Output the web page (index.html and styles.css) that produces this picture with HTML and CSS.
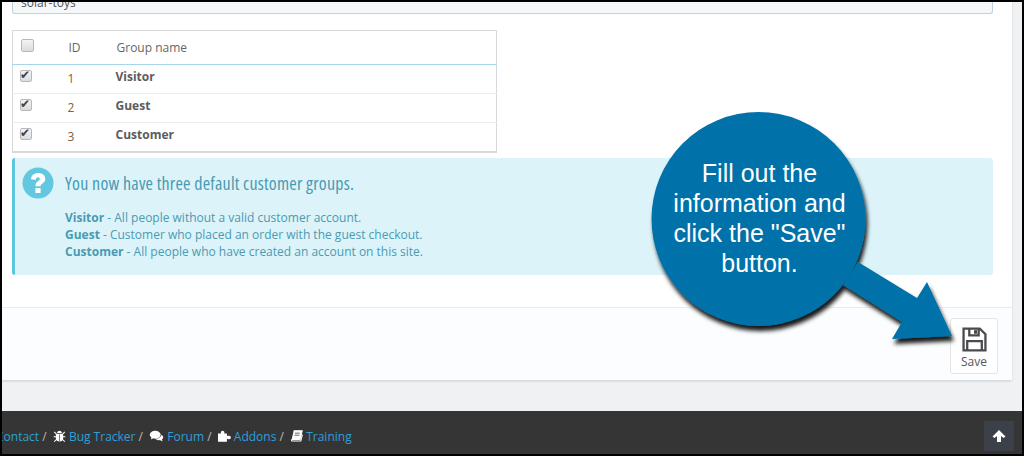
FILE: index.html
```html
<!DOCTYPE html>
<html lang="en">
<head>
<meta charset="UTF-8">
<meta name="viewport" content="width=device-width, initial-scale=1.0">
<title>Customer groups</title>
<link rel="stylesheet" href="styles.css">
</head>
<body>

<div class="frame">

  <main class="content">
    <div class="panel">
      <div class="panel-body">
        <div class="text-field">solar-toys</div>

        <table class="group-table">
          <thead>
            <tr>
              <th class="col-check"><input type="checkbox"></th>
              <th class="col-id">ID</th>
              <th>Group name</th>
            </tr>
          </thead>
          <tbody>
            <tr>
              <td class="col-check"><input type="checkbox" checked></td>
              <td class="col-id">1</td>
              <td class="group-name">Visitor</td>
            </tr>
            <tr>
              <td class="col-check"><input type="checkbox" checked></td>
              <td class="col-id">2</td>
              <td class="group-name">Guest</td>
            </tr>
            <tr>
              <td class="col-check"><input type="checkbox" checked></td>
              <td class="col-id">3</td>
              <td class="group-name">Customer</td>
            </tr>
          </tbody>
        </table>

        <div class="alert-info">
          <svg class="alert-icon" viewBox="0 0 32 32">
            <circle cx="16" cy="16" r="15.5" fill="#62c8e0"/>
            <path d="M9 12.200C9.300 8.300 12.200 6 16.200 6c4.200 0 7.100 2.400 7.100 5.800 0 2.600-1.400 3.900-3.100 5-1.200.8-1.600 1.300-1.600 2.500H13.400c0-2.500.8-3.700 2.400-4.800 1.300-.9 2-1.500 2-2.500 0-1-.7-1.700-1.800-1.700-1.200 0-2 .8-2.100 2.400zM13.400 21h5.200v5h-5.200z" fill="#fff"/>
          </svg>
          <div class="alert-text">
            <h4>You now have three default customer groups.</h4>
            <p><strong>Visitor</strong> - All people without a valid customer account.</p>
            <p><strong>Guest</strong> - Customer who placed an order with the guest checkout.</p>
            <p><strong>Customer</strong> - All people who have created an account on this site.</p>
          </div>
        </div>
      </div>

      <div class="panel-footer">
        <button class="btn-save">
          <svg class="save-icon" viewBox="0 0 24 24">
            <path d="M1.500 1.500H17l5.500 5.500v15.500H1.500z M7 1.500v6.500h9V1.500 M5 22.500v-9h14v9" fill="none" stroke="#4d4a4f" stroke-width="2.200"/>
            <path d="M11.500 3h3v3.500h-3z" fill="#4d4a4f"/>
          </svg>
          Save
        </button>
      </div>
    </div>
  </main>

  <footer class="page-footer">
    <nav class="footer-links">
      <a href="#">Contact</a> /
      <svg class="foot-icon" viewBox="0 0 16 16"><path d="M5 4.500C5 2.800 6.300 1.500 8 1.500s3 1.300 3 3zM4.500 5.500h7c.6 0 1 .5 1 1V11c0 2.200-2 3.800-4.500 3.800S3.500 13.200 3.500 11V6.500c0-.5.400-1 1-1z" fill="#fff"/><path d="M1.500 3l3 3M14.500 3l-3 3M.8 9h3M15.200 9h-3M1.500 15l3-3M14.500 15l-3-3" stroke="#fff" stroke-width="1.300"/><path d="M8 6v8.500" stroke="#363636" stroke-width=".8"/></svg>
      <a href="#">Bug Tracker</a> /
      <svg class="foot-icon foot-icon-wide" viewBox="0 0 16 16"><ellipse cx="6.500" cy="6.500" rx="6.200" ry="4.500" fill="#fff"/><path d="M2.500 9l-1 3 4-2z" fill="#fff"/><path d="M13.500 6.500c1.300.7 2.200 1.800 2.200 3 0 1-.6 1.900-1.500 2.500l.8 2.300-3.200-1.600c-2 .2-4-.5-5-1.700 3.500 0 6.600-1.800 6.700-4.500z" fill="#fff"/></svg>
      <a href="#">Forum</a> /
      <svg class="foot-icon" viewBox="0 0 16 16"><path d="M0 5h3.700C3 3 4 1.500 5.700 1.500S8.400 3 7.700 5H11v3c1.500-.8 5-.5 5 1.800s-3.500 2.600-5 1.700V15H0z" fill="#fff"/></svg>
      <a href="#">Addons</a> /
      <svg class="foot-icon" viewBox="0 0 16 16"><path d="M4.500 1.500H15l-2.800 10.700H3c-.8 0-1.200.4-1.200 1s.4 1 1.200 1h10.300l2-8" fill="none" stroke="#fff" stroke-width="1.300"/><path d="M4.500 1.500H15l-2.800 10.700H2z" fill="#fff"/><path d="M6 4.500h6M5.500 7h6" stroke="#363636" stroke-width=".9"/></svg>
      <a href="#">Training</a>
    </nav>
    <a class="to-top" href="#">
      <svg viewBox="0 0 14 14"><path d="M7 1l6.500 6.500-2 1.500L9 7v6H5V7L2.500 9 .5 7.500z" fill="#fff"/></svg>
    </a>
  </footer>

  <div class="callout">
    <svg class="callout-shape" viewBox="0 0 330 250">
      <defs>
        <filter id="soft-shadow" x="-10%" y="-10%" width="125%" height="125%">
          <feDropShadow dx="2" dy="5" stdDeviation="2" flood-color="#000" flood-opacity=".9"/>
        </filter>
      </defs>
      <g filter="url(#soft-shadow)" fill="#0271a9">
        <circle cx="110.500" cy="110" r="107"/>
        <path d="M210 153 269 189 279 173 304 227 244 230 254 213 195 176z"/>
      </g>
    </svg>
    <p class="callout-text">Fill out the information and click the "Save" button.</p>
  </div>

</div>

</body>
</html>
```

FILE: styles.css
```css
* {
  box-sizing: border-box;
}

html, body {
  height: 100%;
}

body {
  margin: 0;
  font-family: "Open Sans", Arial, sans-serif;
  font-size: 12px;
  color: #555;
  background-color: #000;
  overflow: hidden;
}

/* black outline around the whole shot */
.frame {
  position: relative;
  height: 456px;
  border: 2px solid #000;
  display: flex;
  flex-direction: column;
  overflow: hidden;
  background-color: #eff1f2;
}

.content {
  flex: 1;
  padding-right: 9px;
}

.panel {
  background-color: #fff;
  border-bottom: 1px solid #d9dcde;
  border-right: 1px solid #e3e5e7;
  border-radius: 0 0 4px 0;
  box-shadow: 0 1px 1px rgba(0, 0, 0, 0.08);
}

.panel-body {
  height: 305px;
  padding: 0 19px 0 10px;
}

.text-field {
  height: 12px;
  margin-bottom: 16px;
  padding: 0 8px;
  line-height: 2px;
  font-size: 12px;
  color: #555;
  background-color: #f5f8f9;
  border: 1px solid #bcd3da;
  border-top: 0;
  border-radius: 0 0 3px 3px;
  overflow: hidden;
}

.group-table {
  width: 485px;
  height: 123px;
  margin-bottom: 5px;
  border: 1px solid #d6d8d9;
  border-bottom-width: 2px;
  border-collapse: collapse;
}

.group-table th {
  height: 34px;
  padding: 0 0 0 5px;
  font-weight: normal;
  font-size: 12px;
  text-align: left;
  color: #666;
  border-bottom: 1px solid #a6d5ec;
}

.group-table td {
  height: 29px;
  padding: 0 0 0 5px;
  color: #80603f;
  border-bottom: 1px solid #eaedef;
}

.group-table tr:last-child td {
  border-bottom: 0;
}

.group-table input {
  appearance: none;
  position: relative;
  display: block;
  width: 12px;
  height: 12px;
  margin: 0 0 6px 2px;
  background: linear-gradient(#f4f4f4, #dcdcdc);
  border: 1px solid #b9b9b9;
  border-radius: 2px;
}

.group-table th input {
  width: 13px;
  height: 13px;
  margin: 0 0 5px 3px;
}

.group-table input:checked::after {
  content: "\2714";
  position: absolute;
  left: -1px;
  top: -2px;
  font-family: "DejaVu Sans", sans-serif;
  font-size: 12px;
  font-weight: bold;
  line-height: 13px;
  color: #444;
}

.col-check {
  width: 51px;
}

.col-id {
  width: 48px;
}

.group-table td.col-id {
  padding: 0 0 2px 4px;
}

.group-table td.group-name {
  padding: 0 0 5px 4px;
  font-weight: bold;
  color: #5c5c5c;
}

.alert-info {
  display: flex;
  height: 117px;
  padding: 9px 0 0 7px;
  color: #4a9ab3;
  background-color: #dcf4f9;
  border-left: 3px solid #5bc6de;
  border-radius: 3px;
}

.alert-icon {
  width: 32px;
  height: 32px;
  flex-shrink: 0;
}

.alert-text {
  margin-left: 11px;
}

.alert-text h4 {
  margin: 6px 0 16px;
  font-family: "Open Sans", sans-serif;
  font-size: 18px;
  font-stretch: 75%;
  font-weight: normal;
  letter-spacing: 0.2px;
  line-height: 20px;
  color: #4a9ab3;
}

.alert-text p {
  margin: 0;
  line-height: 17px;
}

.panel-footer {
  display: flex;
  justify-content: flex-end;
  height: 73px;
  padding: 10px 14px 0 0;
  background-color: #fcfdfe;
  border-top: 1px solid #eaedef;
}

.btn-save {
  display: flex;
  flex-direction: column;
  align-items: center;
  width: 48px;
  height: 56px;
  padding: 8px 0 0;
  font-family: "Open Sans", Arial, sans-serif;
  font-size: 12px;
  color: #555;
  background-color: #fff;
  border: 1px solid #e2e4e6;
  border-radius: 3px;
}

.save-icon {
  width: 25px;
  height: 25px;
  margin-bottom: 1px;
}

.page-footer {
  display: flex;
  justify-content: space-between;
  align-items: center;
  height: 43px;
  margin-top: 30px;
  padding: 7px 8px 0 0;
  font-size: 12px;
  color: #bbb;
  background-color: #353535;
}

.footer-links {
  margin-left: -6px;
}

.footer-links a {
  color: #2f9fd9;
  text-decoration: none;
}

.foot-icon {
  width: 13px;
  height: 14px;
  margin-left: 3px;
  vertical-align: -2px;
}

.foot-icon-wide {
  width: 15px;
}

.to-top {
  display: flex;
  justify-content: center;
  align-items: center;
  width: 30px;
  height: 30px;
  background-color: #3c4049;
}

.to-top svg {
  width: 14px;
  height: 14px;
}

/* speech bubble drawn over the page */
.callout {
  position: absolute;
  left: 646px;
  top: 107px;
}

.callout-shape {
  display: block;
  width: 330px;
  height: 250px;
}

.callout-text {
  position: absolute;
  left: 14px;
  top: 49px;
  width: 195px;
  margin: 0;
  font-family: "Liberation Sans", Arial, sans-serif;
  font-size: 25px;
  line-height: 30px;
  text-align: center;
  color: #fff;
}
```
